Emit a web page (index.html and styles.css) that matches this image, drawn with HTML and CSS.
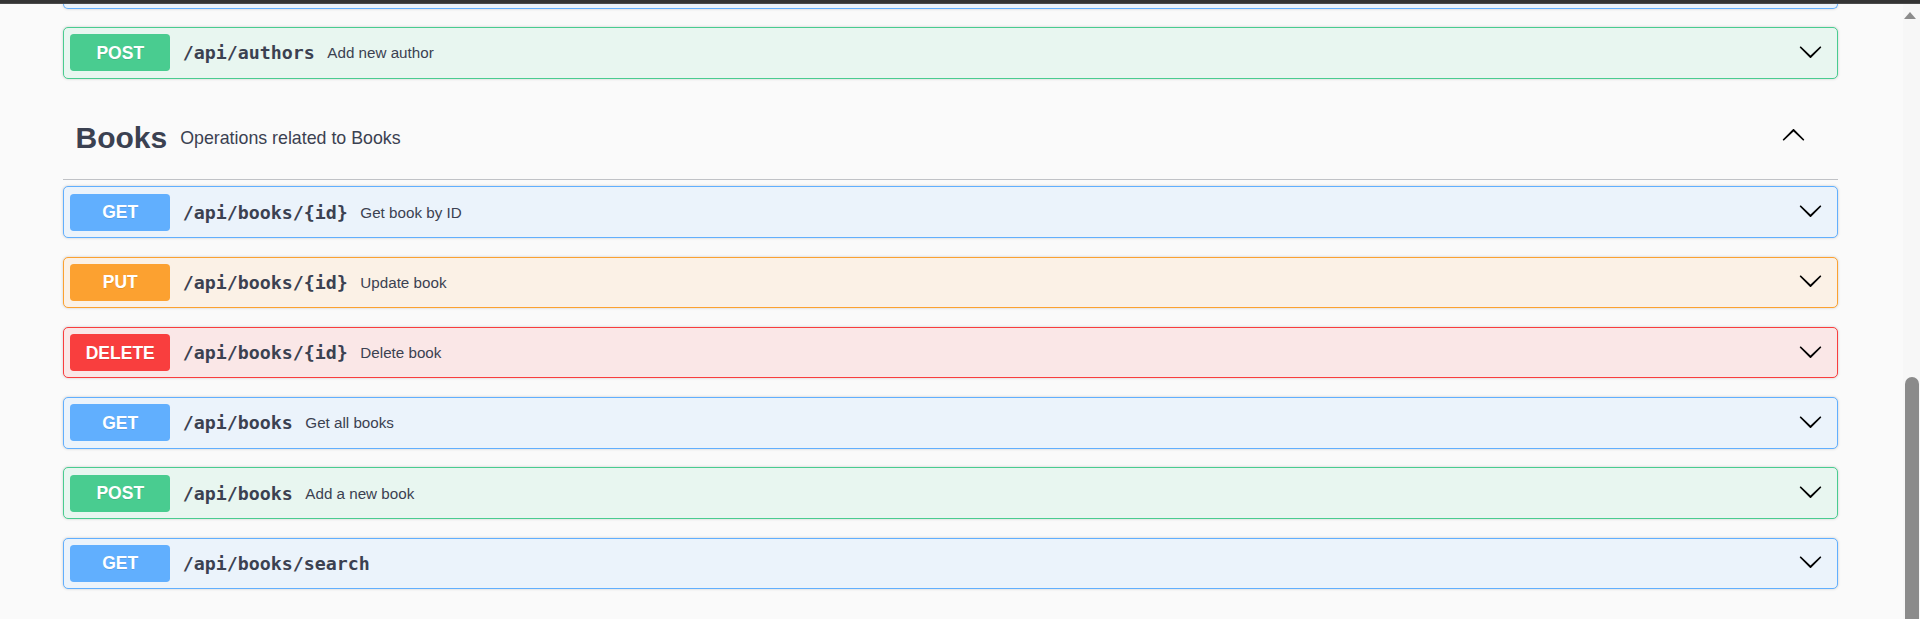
FILE: index.html
```html
<!DOCTYPE html>
<html lang="en">
<head>
<meta charset="utf-8">
<title>Swagger UI</title>
<link rel="stylesheet" href="styles.css">
</head>
<body>
<div class="topbar"></div>
<div class="frame">
  <main class="main">
    <div class="opblock opblock-get cut"></div>

    <div class="opblock opblock-post">
      <div class="summary">
        <span class="method">POST</span>
        <span class="path">/api/authors</span>
        <span class="desc">Add new author</span>
        <svg class="arrow" viewBox="0 0 20 20" width="25" height="25"><path d="M17.418 6.109c.272-.268.709-.268.979 0s.271.701 0 .969l-7.908 7.830c-.27.268-.707.268-.979 0l-7.908-7.83c-.27-.268-.27-.701 0-.969.271-.268.709-.268.979 0L10 13.25l7.418-7.141z"/></svg>
      </div>
    </div>

    <section class="tag-section">
      <h3 class="tag">
        <span class="tag-name">Books</span>
        <small class="tag-desc">Operations related to Books</small>
        <svg class="arrow arrow-up" viewBox="0 0 20 20" width="25" height="25"><path d="M17.418 6.109c.272-.268.709-.268.979 0s.271.701 0 .969l-7.908 7.83c-.27.268-.707.268-.979 0l-7.908-7.83c-.27-.268-.27-.701 0-.969.271-.268.709-.268.979 0L10 13.25l7.418-7.141z"/></svg>
      </h3>
      <div class="ops">
        <div class="opblock opblock-get">
          <div class="summary">
            <span class="method">GET</span>
            <span class="path">/api/books/{id}</span>
            <span class="desc">Get book by ID</span>
            <svg class="arrow" viewBox="0 0 20 20" width="25" height="25"><path d="M17.418 6.109c.272-.268.709-.268.979 0s.271.701 0 .969l-7.908 7.83c-.27.268-.707.268-.979 0l-7.908-7.83c-.27-.268-.27-.701 0-.969.271-.268.709-.268.979 0L10 13.25l7.418-7.141z"/></svg>
          </div>
        </div>
        <div class="opblock opblock-put">
          <div class="summary">
            <span class="method">PUT</span>
            <span class="path">/api/books/{id}</span>
            <span class="desc">Update book</span>
            <svg class="arrow" viewBox="0 0 20 20" width="25" height="25"><path d="M17.418 6.109c.272-.268.709-.268.979 0s.271.701 0 .969l-7.908 7.83c-.27.268-.707.268-.979 0l-7.908-7.83c-.27-.268-.27-.701 0-.969.271-.268.709-.268.979 0L10 13.25l7.418-7.141z"/></svg>
          </div>
        </div>
        <div class="opblock opblock-delete">
          <div class="summary">
            <span class="method">DELETE</span>
            <span class="path">/api/books/{id}</span>
            <span class="desc">Delete book</span>
            <svg class="arrow" viewBox="0 0 20 20" width="25" height="25"><path d="M17.418 6.109c.272-.268.709-.268.979 0s.271.701 0 .969l-7.908 7.83c-.27.268-.707.268-.979 0l-7.908-7.83c-.27-.268-.27-.701 0-.969.271-.268.709-.268.979 0L10 13.25l7.418-7.141z"/></svg>
          </div>
        </div>
        <div class="opblock opblock-get">
          <div class="summary">
            <span class="method">GET</span>
            <span class="path">/api/books</span>
            <span class="desc">Get all books</span>
            <svg class="arrow" viewBox="0 0 20 20" width="25" height="25"><path d="M17.418 6.109c.272-.268.709-.268.979 0s.271.701 0 .969l-7.908 7.83c-.27.268-.707.268-.979 0l-7.908-7.83c-.27-.268-.27-.701 0-.969.271-.268.709-.268.979 0L10 13.25l7.418-7.141z"/></svg>
          </div>
        </div>
        <div class="opblock opblock-post">
          <div class="summary">
            <span class="method">POST</span>
            <span class="path">/api/books</span>
            <span class="desc">Add a new book</span>
            <svg class="arrow" viewBox="0 0 20 20" width="25" height="25"><path d="M17.418 6.109c.272-.268.709-.268.979 0s.271.701 0 .969l-7.908 7.83c-.27.268-.707.268-.979 0l-7.908-7.83c-.27-.268-.27-.701 0-.969.271-.268.709-.268.979 0L10 13.25l7.418-7.141z"/></svg>
          </div>
        </div>
        <div class="opblock opblock-get">
          <div class="summary">
            <span class="method">GET</span>
            <span class="path">/api/books/search</span>
            <svg class="arrow" viewBox="0 0 20 20" width="25" height="25"><path d="M17.418 6.109c.272-.268.709-.268.979 0s.271.701 0 .969l-7.908 7.83c-.27.268-.707.268-.979 0l-7.908-7.83c-.27-.268-.27-.701 0-.969.271-.268.709-.268.979 0L10 13.25l7.418-7.141z"/></svg>
          </div>
        </div>
      </div>
    </section>
  </main>
  <div class="scrollbar">
    <div class="sb-arrow"></div>
    <div class="sb-thumb"></div>
  </div>
</div>
</body>
</html>
```

FILE: styles.css
```css
html, body {
  margin: 0;
  padding: 0;
  background: #fafafa;
  overflow: hidden;
  height: 619px;
}

body {
  font-family: "Liberation Sans", Arial, sans-serif;
  color: #3b4151;
}

.topbar {
  height: 4px;
  background: linear-gradient(#343434 0 3px, #4a4a4a 3px 4px);
}

.frame {
  display: flex;
  height: 615px;
  overflow: hidden;
}

.main {
  flex: 1;
  min-width: 0;
  padding: 0 65px 0 63px;
}

.opblock {
  border: 1px solid #000;
  border-radius: 5px;
  margin: 0 0 18.75px;
  box-shadow: 0 0 3px rgba(0, 0, 0, .19);
}

.opblock.cut {
  height: 4px;
  border-top: none;
  border-radius: 0 0 5px 5px;
  margin-bottom: 18px;
}

.opblock-get { background: #ebf3fb; border-color: #61affe; }
.opblock-get .method { background: #61affe; }
.opblock-post { background: #e8f6f0; border-color: #49cc90; }
.opblock-post .method { background: #49cc90; }
.opblock-put { background: #fbf1e6; border-color: #fca130; }
.opblock-put .method { background: #fca130; }
.opblock-delete { background: #fae7e7; border-color: #f93e3e; }
.opblock-delete .method { background: #f93e3e; }

.summary {
  display: flex;
  align-items: center;
  padding: 6.25px;
}

.method {
  min-width: 100px;
  padding: 7.5px 0;
  line-height: 22px;
  font-size: 17.5px;
  font-weight: 700;
  color: #fff;
  text-align: center;
  border-radius: 3.75px;
  text-shadow: 0 1px 0 rgba(0, 0, 0, .1);
}

.path {
  padding: 0 12.5px;
  font-family: "DejaVu Sans Mono", monospace;
  font-weight: 700;
  font-size: 18.3px;
  color: #3b4151;
}

.desc {
  font-size: 15.2px;
  color: #3b4151;
}

.arrow {
  margin-left: auto;
  margin-right: 8px;
  margin-bottom: 3px;
  fill: #000;
  flex: none;
}

.tag-section {
  display: flex;
  flex-direction: column;
}

.tag {
  display: flex;
  align-items: center;
  height: 82px;
  margin: 0;
  padding: 0 25px 0 12.5px;
  border-bottom: 1px solid rgba(59, 65, 81, .3);
}

.tag-name {
  font-size: 30px;
  font-weight: 700;
  color: #3b4151;
}

.tag-desc {
  padding-left: 13px;
  font-size: 17.8px;
  font-weight: 400;
  color: #3b4151;
}

.arrow-up {
  transform: scaleY(-1);
  margin-right: 7px;
  margin-bottom: 6px;
}

.ops {
  padding-top: 6px;
}

.scrollbar {
  flex: none;
  width: 17px;
  background: #f7f7f7;
  display: flex;
  flex-direction: column;
}

.sb-arrow {
  width: 0;
  height: 0;
  margin: 8px 0 0 1px;
  border-left: 6.5px solid transparent;
  border-right: 6.5px solid transparent;
  border-bottom: 7px solid #8c8c8c;
}

.sb-thumb {
  width: 14px;
  height: 300px;
  margin: 358px 0 0 2px;
  background: #8b8b8b;
  border-radius: 7px 7px 0 0;
  flex: none;
}
```
